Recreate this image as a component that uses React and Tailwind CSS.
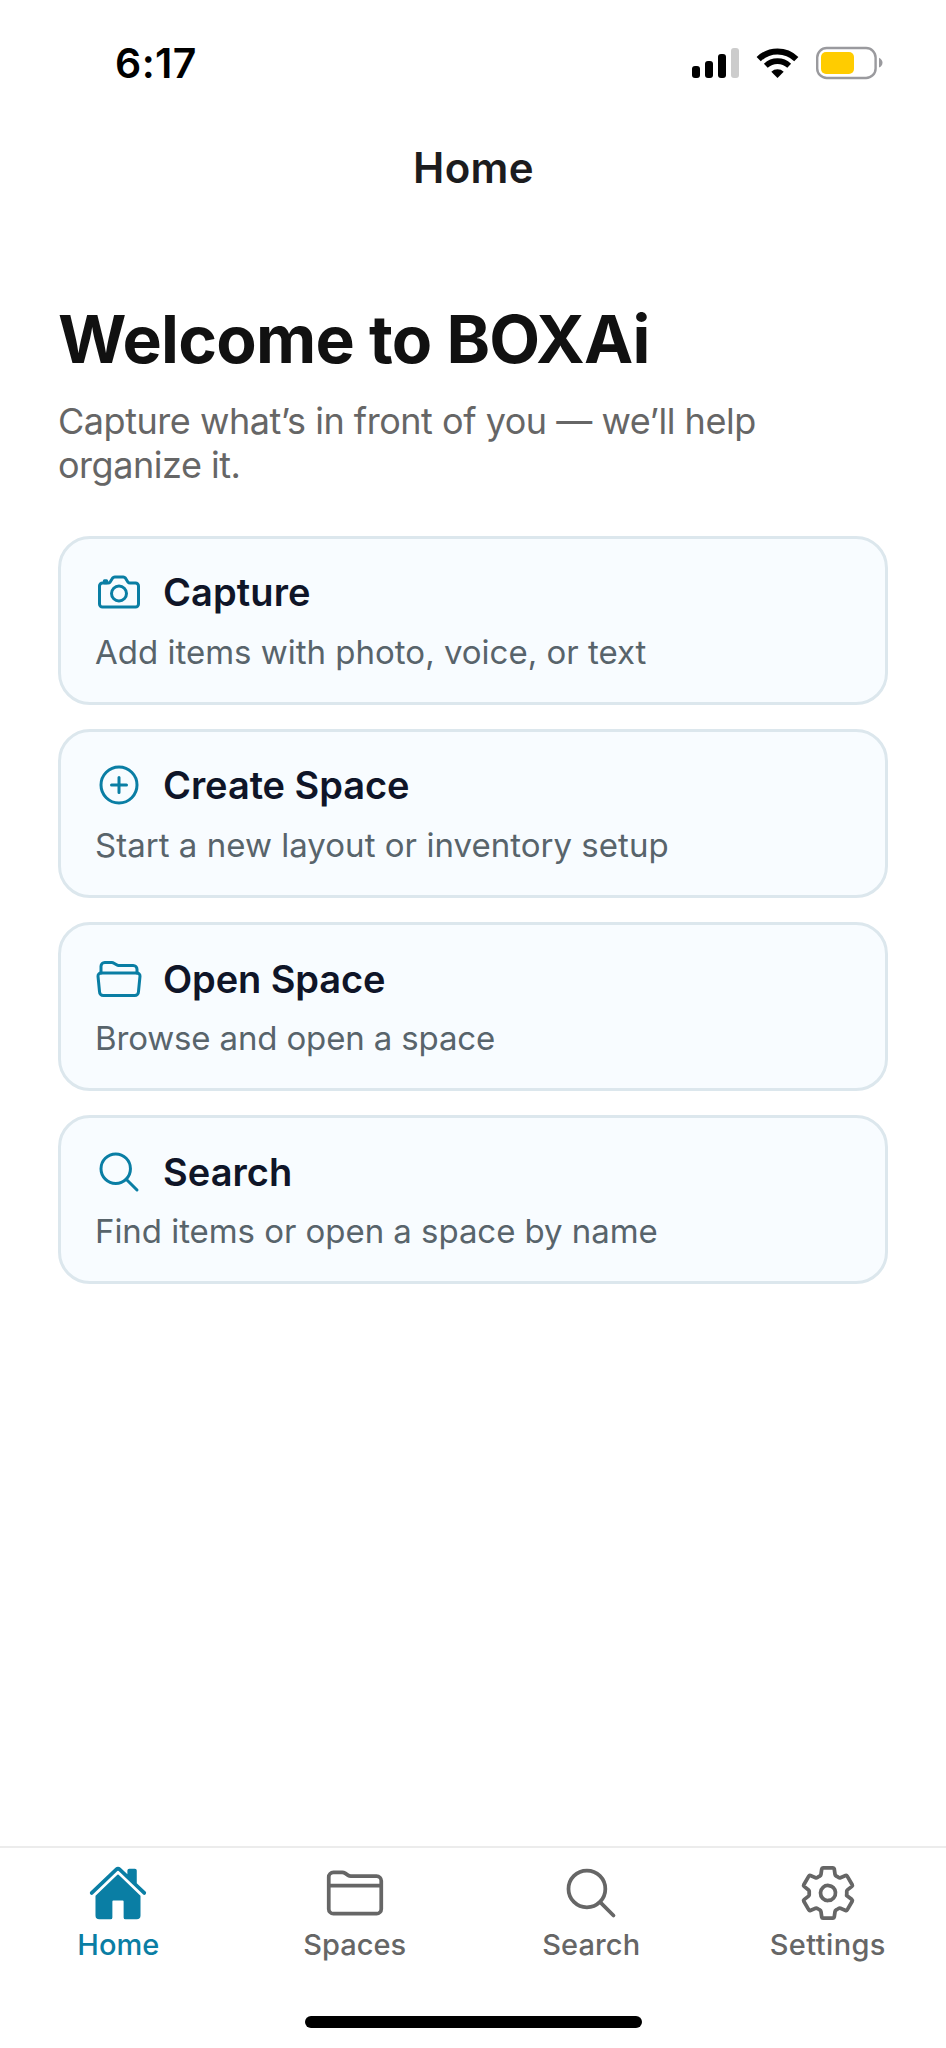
import {
  IoCameraOutline,
  IoAddCircleOutline,
  IoFolderOpenOutline,
  IoSearchOutline,
  IoHome,
  IoFolderOutline,
  IoSettingsOutline,
} from "react-icons/io5";

const cards = [
  { icon: IoCameraOutline, title: "Capture", text: "Add items with photo, voice, or text", tracking: "tracking-[0.1px]", textTracking: "tracking-normal" },
  { icon: IoAddCircleOutline, title: "Create Space", text: "Start a new layout or inventory setup", tracking: "tracking-[-0.07px]", textTracking: "tracking-[0.03px]" },
  { icon: IoFolderOpenOutline, title: "Open Space", text: "Browse and open a space", tracking: "tracking-[-0.1px]", textTracking: "tracking-[-0.15px]" },
  { icon: IoSearchOutline, title: "Search", text: "Find items or open a space by name", tracking: "tracking-[0.05px]", textTracking: "tracking-[-0.05px]" },
];

const tabs = [
  { icon: IoHome, label: "Home", style: "text-[#0a7ea4]" },
  { icon: IoFolderOutline, label: "Spaces", style: "text-[#666666] tracking-[0.05px]" },
  { icon: IoSearchOutline, label: "Search", style: "text-[#666666] tracking-[0.1px]" },
  { icon: IoSettingsOutline, label: "Settings", style: "text-[#666666] tracking-[0.4px]" },
];

function StatusIcons() {
  return (
    <svg className="h-[34px] w-[192px]" viewBox="692 46 192 34" fill="none">
      <rect x="692" y="66" width="8" height="12" rx="3" fill="#000" />
      <rect x="705" y="61" width="8" height="17" rx="3" fill="#000" />
      <rect x="718" y="54" width="8" height="24" rx="3" fill="#000" />
      <rect x="731" y="48" width="8" height="30" rx="3" fill="#cccccc" />
      <path d="M758.7 59.1 A27 27 0 0 1 796.3 59.1" stroke="#000" strokeWidth="6" />
      <path d="M765.8 65.7 A17.3 17.3 0 0 1 789.2 65.7" stroke="#000" strokeWidth="5.6" />
      <path d="M777.5 78 L771.3 71.7 A9 9 0 0 1 783.7 71.7 Z" fill="#000" />
      <rect x="817.2" y="48" width="58.4" height="30" rx="9.5" stroke="#9a9a9e" strokeWidth="2.4" />
      <rect x="821" y="52" width="33" height="22" rx="5" fill="#ffcc00" />
      <path d="M879 57.8 Q882.5 59.6 882.5 62.7 Q882.5 65.8 879 67.6 Z" fill="#9a9a9e" />
    </svg>
  );
}

function ActionCard({ icon: Icon, title, text, tracking, textTracking }) {
  return (
    <button className="flex h-[169px] w-full flex-col rounded-[32px] border-3 border-[#dce7ed] bg-[#f8fcff] pt-[29.5px] pl-[34px] text-left">
      <span className="flex h-12 items-center gap-[20px]">
        <Icon className="size-12 text-[#0a7ea4]" />
        <span className={`text-[38px] leading-[48px] font-semibold text-[#0f1528] ${tracking}`}>{title}</span>
      </span>
      <span className={`mt-[15.5px] text-[33px] leading-[40px] text-[#58646b] ${textTracking}`}>{text}</span>
    </button>
  );
}

export default function App() {
  return (
    <div className="flex h-[2048px] w-[946px] flex-col bg-white font-['Inter',sans-serif]">
      <div className="flex h-[126px] items-center justify-between pr-[62px] pl-[115px]">
        <span className="text-[41px] leading-[50px] font-semibold tracking-[0.4px] text-black">6:17</span>
        <StatusIcons />
      </div>
      <header className="flex h-[84px] items-center justify-center pl-[1px]">
        <h1 className="text-[42px] leading-[50px] font-semibold tracking-[0.35px] text-[#1c1c1e]">Home</h1>
      </header>

      <main className="flex flex-1 flex-col px-[58px] pt-[89px]">
        <h2 className="text-[66px] leading-[80px] font-bold tracking-[-0.74px] text-[#111111]">Welcome to BOXAi</h2>
        <p className="mt-[21px] w-[760px] text-[36px] leading-[43.5px] tracking-[-0.47px] text-[#666666]">
          Capture what’s in front of you — we’ll help organize it.
        </p>
        <div className="mt-[48.6px] flex flex-col gap-[24.3px]">
          {cards.map((card) => (
            <ActionCard key={card.title} {...card} />
          ))}
        </div>
      </main>

      <nav className="h-[202px] border-t-2 border-[#ececec] pt-[15px]">
        <div className="grid grid-cols-4">
          {tabs.map(({ icon: Icon, label, style }) => (
            <a key={label} className={`flex flex-col items-center ${style}`}>
              <Icon className="size-[60px]" />
              <span className="mt-[7px] text-[29px] leading-[30px] font-medium">{label}</span>
            </a>
          ))}
        </div>
        <div className="mx-auto mt-[56px] h-[12px] w-[337px] rounded-full bg-black" />
      </nav>
    </div>
  );
}
